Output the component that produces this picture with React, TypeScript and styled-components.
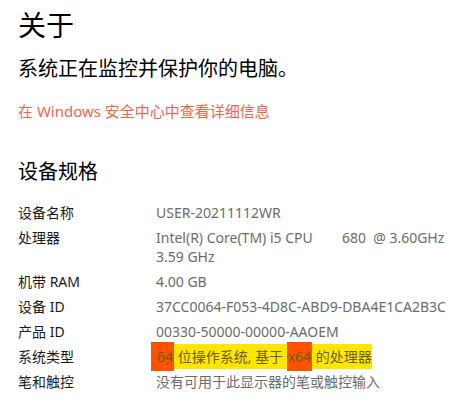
import type { ReactNode } from "react";
import styled, { createGlobalStyle } from "styled-components";

const GlobalStyle = createGlobalStyle`
  html, body {
    margin: 0;
    padding: 0;
    background: #ffffff;
  }
  body {
    font-family: "Noto Sans", "Noto Sans CJK SC", sans-serif;
  }
`;

interface Spec {
  label: string;
  value: ReactNode;
}

const Mark = styled("span")<{ tone: "yellow" | "orange"; bleed?: boolean }>(
  ({ tone, bleed }) => ({
    background: tone === "orange" ? "#ff5200" : "#ffe600",
    color: "#6b6000",
    padding: tone === "orange" ? "5px 1px" : "3px 0",
    paddingLeft: bleed ? "6px" : undefined,
    marginLeft: bleed ? "-5px" : undefined,
    boxDecorationBreak: "clone",
  })
);

function getSpecs(): Spec[] {
  return [
    { label: "设备名称", value: "USER-20211112WR" },
    {
      label: "处理器",
      value: "Intel(R) Core(TM) i5 CPU        680  @ 3.60GHz\n3.59 GHz",
    },
    { label: "机带 RAM", value: "4.00 GB" },
    { label: "设备 ID", value: "37CC0064-F053-4D8C-ABD9-DBA4E1CA2B3C" },
    { label: "产品 ID", value: "00330-50000-00000-AAOEM" },
    {
      label: "系统类型",
      value: (
        <>
          <Mark tone="orange" bleed>
            64
          </Mark>
          <Mark tone="yellow"> 位操作系统, 基于 </Mark>
          <Mark tone="orange">x64</Mark>
          <Mark tone="yellow"> 的处理器</Mark>
        </>
      ),
    },
    { label: "笔和触控", value: "没有可用于此显示器的笔或触控输入" },
  ];
}

export default function App() {
  const specs = getSpecs();

  return (
    <Page>
      <GlobalStyle />
      <Title>关于</Title>
      <Subtitle>系统正在监控并保护你的电脑。</Subtitle>
      <Link>在 Windows 安全中心中查看详细信息</Link>
      <SectionTitle>设备规格</SectionTitle>
      <SpecList>
        {specs.map((spec) => (
          <SpecRow key={spec.label}>
            <Label>{spec.label}</Label>
            <Value>{spec.value}</Value>
          </SpecRow>
        ))}
      </SpecList>
    </Page>
  );
}

const Page = styled("div")({
  width: "459px",
  height: "401px",
  boxSizing: "border-box",
  padding: "7px 0 0 18px",
  overflow: "hidden",
  display: "flex",
  flexDirection: "column",
  alignItems: "flex-start",
});

const Title = styled("h1")({
  margin: 0,
  fontSize: "28px",
  lineHeight: "36px",
  fontWeight: 400,
  color: "#000000",
});

const Subtitle = styled("p")({
  margin: "12px 0 0",
  fontSize: "20px",
  lineHeight: "28px",
  color: "#000000",
});

const Link = styled("a")({
  marginTop: "18px",
  fontSize: "15px",
  lineHeight: "20px",
  color: "#ee6650",
  textDecoration: "none",
  cursor: "pointer",
});

const SectionTitle = styled("h2")({
  margin: "37px 0 0",
  fontSize: "20px",
  lineHeight: "28px",
  fontWeight: 400,
  color: "#000000",
});

const SpecList = styled("div")({
  marginTop: "17px",
  display: "flex",
  flexDirection: "column",
  gap: "6px",
  alignSelf: "stretch",
});

const SpecRow = styled("div")({
  display: "grid",
  gridTemplateColumns: "138px 1fr",
  fontSize: "14px",
  lineHeight: "19px",
});

const Label = styled("span")({
  color: "#1a1a1a",
});

const Value = styled("span")({
  color: "#6b6b6b",
  whiteSpace: "pre-wrap",
});
